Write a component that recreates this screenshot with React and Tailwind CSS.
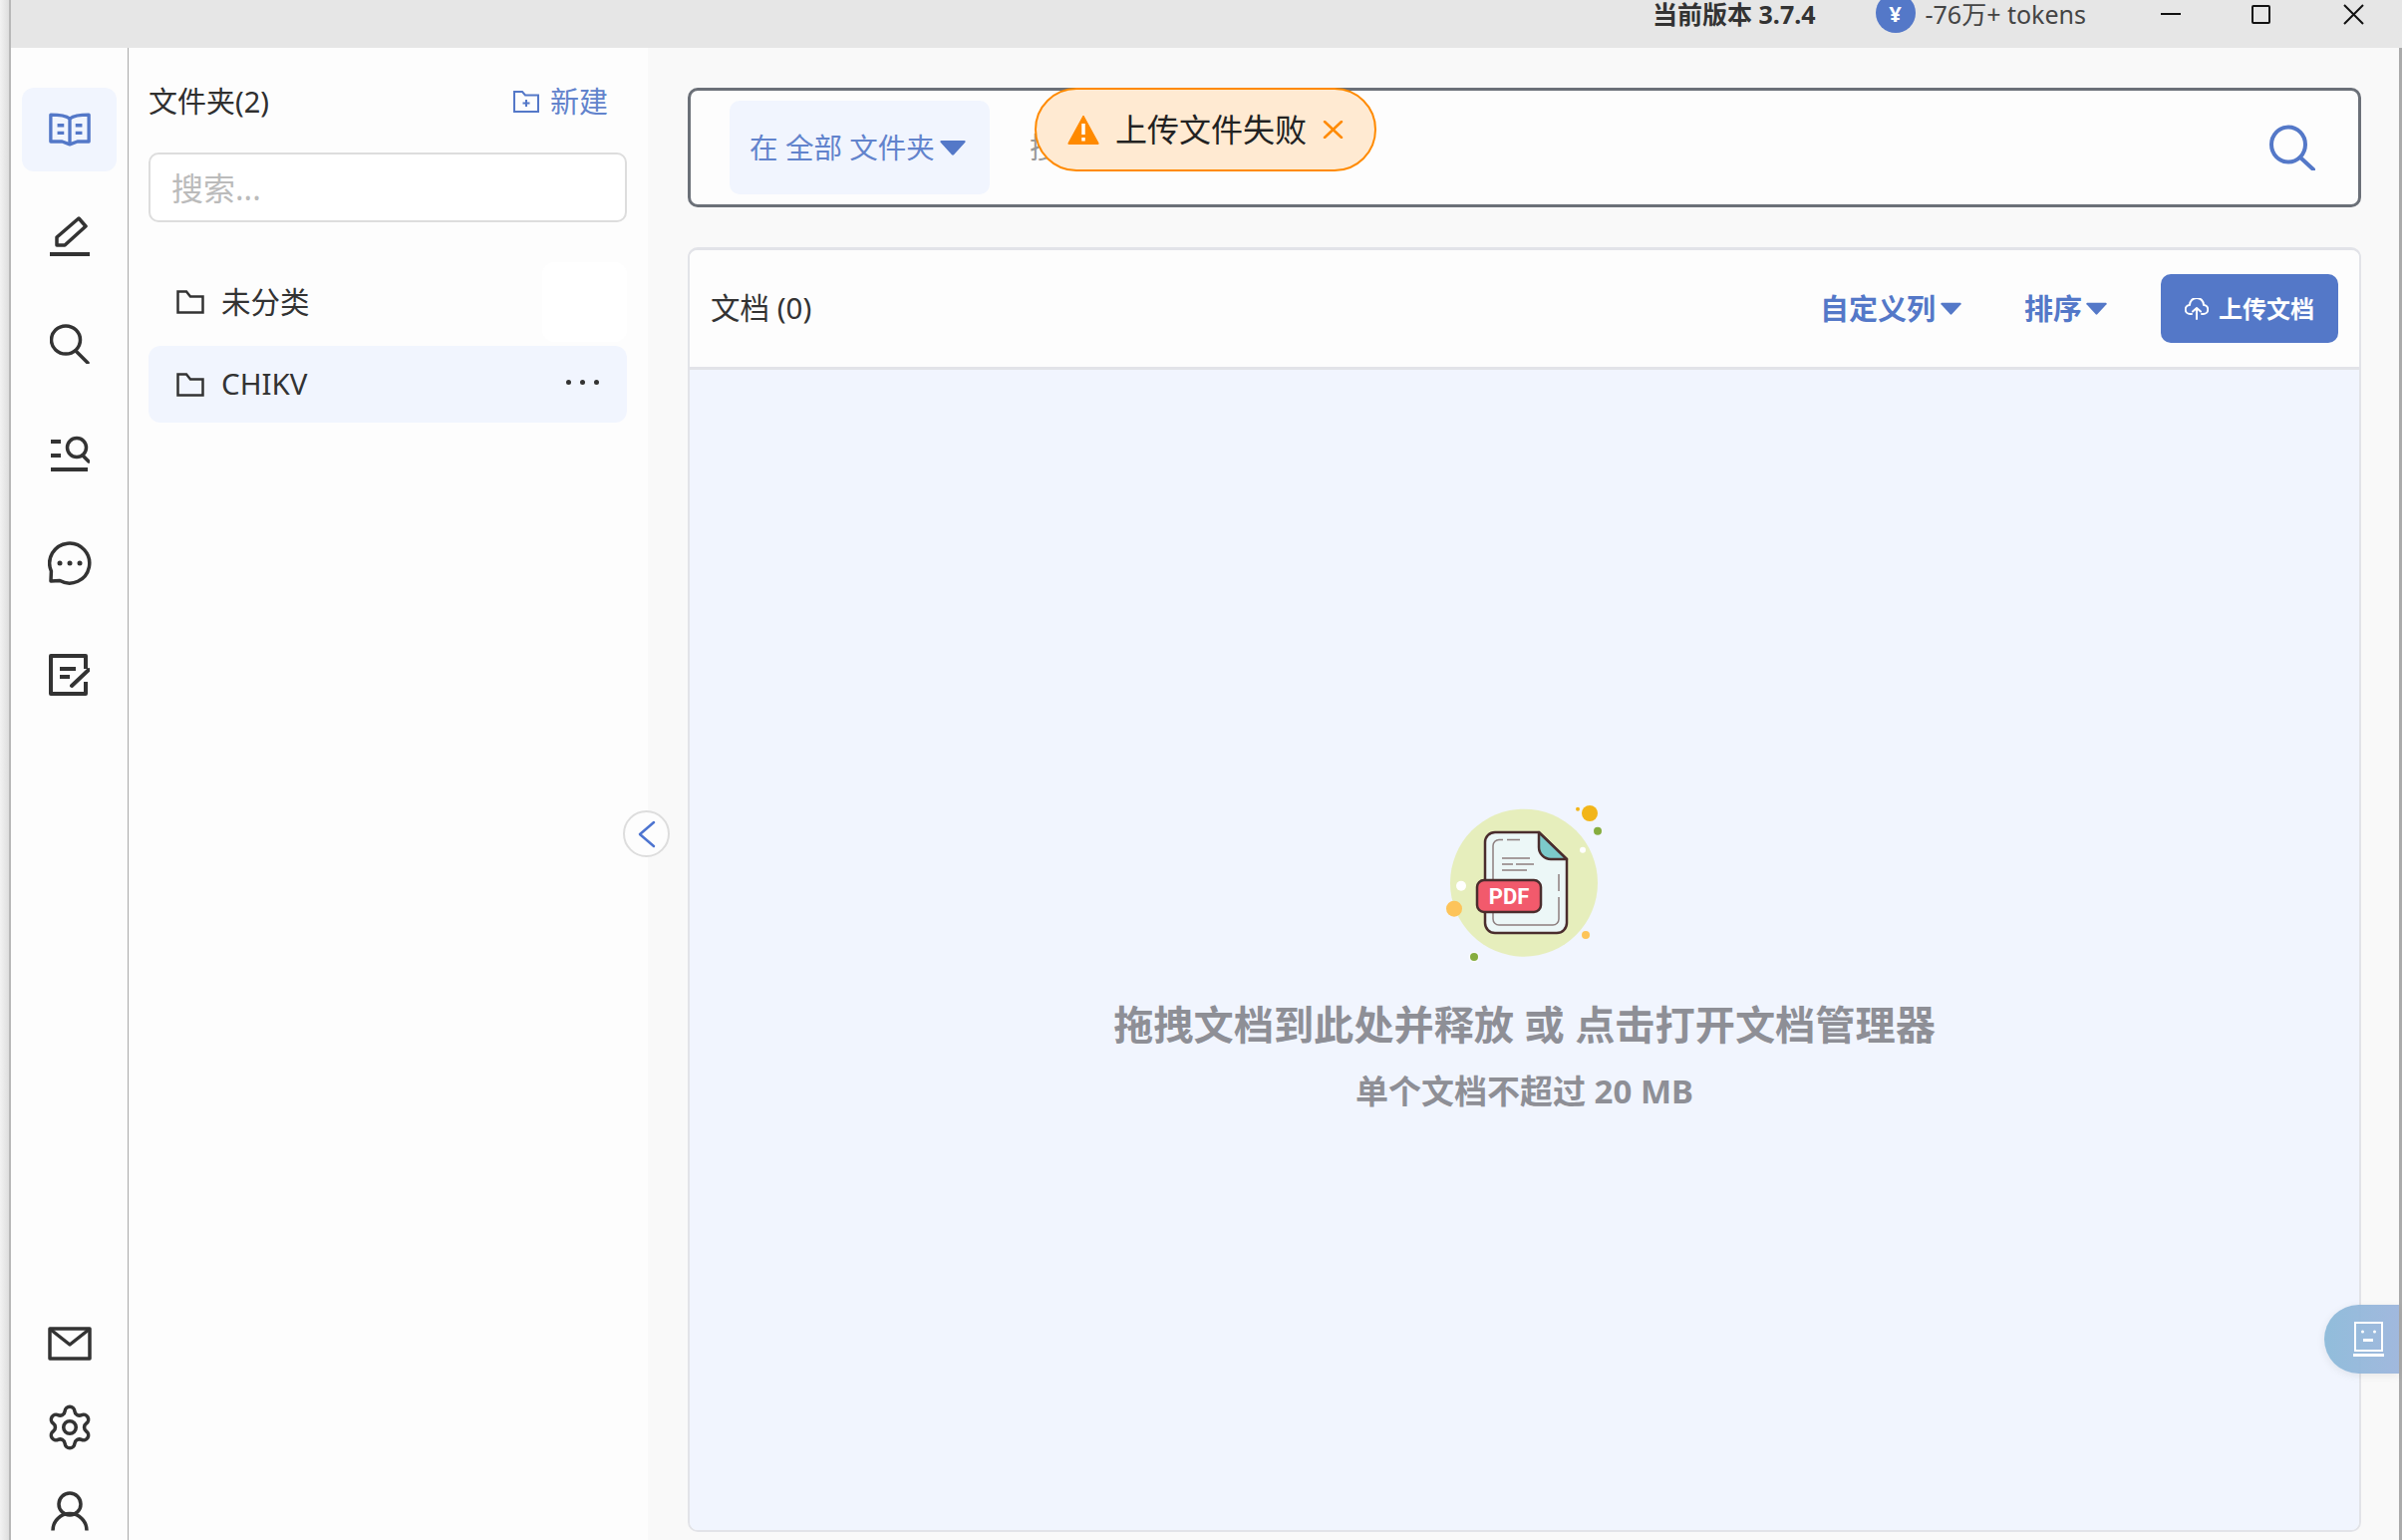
import React from 'react';
import { Settings } from 'lucide-react';

const DARK = '#333333';
const BLUE = '#5478c8';
const FONT = "font-['Noto_Sans','Noto_Sans_CJK_SC',sans-serif]";

// rail icons, each drawn at the size it has in the picture
const BookIcon = () => (
  <svg width="44" height="35" viewBox="0 0 46 36" fill="none" stroke={BLUE} strokeWidth="3.5" strokeLinejoin="round">
    <path d="M23 6C19 3 9 2 3 2V30H15L23 33L31 30H43V2C37 2 27 3 23 6Z" />
    <path d="M23 6V31M10 13H17M10 21H17M29 13H36M29 21H36" />
  </svg>
);

const PenIcon = () => (
  <svg width="40" height="40" viewBox="0 0 40 40" fill="none" stroke={DARK} strokeWidth="3.5" strokeLinejoin="round">
    <path d="M7 29V21L29 2L36 10L15 29Z" />
    <path d="M0 38H40" strokeWidth="4" />
  </svg>
);

const SearchIcon = () => (
  <svg width="40" height="40" viewBox="0 0 40 40" fill="none" stroke={DARK} strokeWidth="3.5" strokeLinecap="round">
    <ellipse cx="16" cy="16" rx="14.5" ry="14" />
    <path d="M26 27L38 39" />
  </svg>
);

const ListSearchIcon = () => (
  <svg width="40" height="36" viewBox="0 0 40 36" fill="none" stroke={DARK} strokeWidth="3.5">
    <path d="M1 6H11M1 20H11" strokeWidth="4" />
    <circle cx="27" cy="12" r="9.5" />
    <path d="M33 20L39 26" strokeLinecap="round" />
    <path d="M1 34H38" strokeWidth="4" />
  </svg>
);

const ChatIcon = () => (
  <svg width="44" height="44" viewBox="0 0 44 44" fill={DARK}>
    <path d="M3 40L3.4 30A20 20 0 1 1 12 39.5Z" fill="none" stroke={DARK} strokeWidth="3.5" strokeLinejoin="round" />
    <circle cx="12" cy="22" r="2.5" />
    <circle cx="22" cy="22" r="2.5" />
    <circle cx="32" cy="22" r="2.5" />
  </svg>
);

const NoteIcon = () => (
  <svg width="41" height="42" viewBox="0 0 41 42" fill="none" stroke={DARK} strokeWidth="4">
    <path d="M37 15V2H2V40H37V28" strokeLinejoin="round" />
    <path d="M11 15H27M11 23H21" />
    <path d="M23 32L40 16" strokeLinecap="round" />
  </svg>
);

const MailIcon = () => (
  <svg width="44" height="34" viewBox="0 0 44 34" fill="none" stroke={DARK} strokeWidth="3.5" strokeLinejoin="round">
    <rect x="2" y="2" width="40" height="30" />
    <path d="M3 3L22 18L41 3" />
  </svg>
);

const UserIcon = () => (
  <svg width="38" height="40" viewBox="0 0 38 40" fill="none" stroke={DARK} strokeWidth="3.5">
    <circle cx="19" cy="13" r="11" />
    <path d="M2 39.5A17 17 0 0 1 36 39.5" />
  </svg>
);

const FolderIcon = () => (
  <svg width="28" height="24" viewBox="0 0 28 24" fill="none" stroke={DARK} strokeWidth="2.5">
    <path d="M1.5 1.5H10L14 6.5H26.5V22.5H1.5Z" />
  </svg>
);

const NewFolderIcon = () => (
  <svg width="26" height="22" viewBox="0 0 26 22" fill="none" stroke={BLUE} strokeWidth="2">
    <path d="M1 1H9L12 4.5H25V21H1Z" />
    <path d="M13 9V16M9.5 12.5H16.5" />
  </svg>
);

const Caret = ({ w = 26, h = 16 }) => (
  <svg width={w} height={h} viewBox="0 0 26 16" preserveAspectRatio="none" fill={BLUE}>
    <path d="M1.5 1H24.5C25.5 1 26 2 25.4 2.8L14 15.2C13.4 15.8 12.6 15.8 12 15.2L.6 2.8C0 2 .5 1 1.5 1Z" />
  </svg>
);

// the document with PDF badge in the empty state
const PdfArt = () => (
  <svg width="200" height="190" viewBox="0 0 200 190" className="mr-[19px]">
    <circle cx="109" cy="95.7" r="74" fill="#e6eebc" />
    <circle cx="175" cy="26" r="8" fill="#f2b519" />
    <circle cx="163" cy="21.7" r="2" fill="#f2b519" />
    <circle cx="183" cy="43.7" r="4" fill="#86ad3f" />
    <circle cx="168" cy="62.7" r="3" fill="#fff" />
    <circle cx="46" cy="98.7" r="5" fill="#fff" />
    <circle cx="39" cy="121.7" r="8" fill="#fdc45a" />
    <circle cx="171" cy="148" r="4" fill="#fdc45a" />
    <circle cx="59" cy="170" r="5.5" fill="#fff" opacity=".6" />
    <circle cx="59" cy="170" r="4" fill="#86ad3f" />
    <path d="M80 45H124L152 72V136A10 10 0 0 1 142 146H80A10 10 0 0 1 70 136V55A10 10 0 0 1 80 45Z" fill="#ecf7f7" stroke="#4a2d2d" strokeWidth="2.5" />
    <path d="M124 45V60A12 12 0 0 0 136 72H152Z" fill="#7ccacb" stroke="#4a2d2d" strokeWidth="2.5" strokeLinejoin="round" />
    <g fill="none" stroke="#8d7f7f" strokeWidth="1.5">
      <path d="M105 52.5H92M88 52.5H84A6 6 0 0 0 78 58.5V132A6 6 0 0 0 84 138H138A6 6 0 0 0 144 132V110M144 104V87" />
      <path d="M87 71H115M87 77H98M101 77H119M87 83H112" />
    </g>
    <rect x="62" y="93" width="64" height="32" rx="7" fill="#f25a6c" stroke="#4a2d2d" strokeWidth="2.5" />
    <text x="94" y="117" textAnchor="middle" fill="#fff" fontSize="22" fontWeight="700" fontFamily="Roboto, sans-serif">PDF</text>
  </svg>
);

const Rail = () => (
  <div className="flex w-[118px] shrink-0 flex-col items-center justify-between border-r border-[#aaaaaa] bg-[#fdfdfd] pt-10 pb-[7px]">
    <div className="flex flex-col items-center">
      <div className="flex h-[84px] w-[95px] items-center justify-center rounded-xl bg-[#f1f5fe]"><BookIcon /></div>
      <div className="mt-[23px] flex h-[84px] items-center"><PenIcon /></div>
      <div className="mt-[24px] flex h-[84px] items-center"><SearchIcon /></div>
      <div className="mt-[26px] flex h-[84px] items-center"><ListSearchIcon /></div>
      <div className="mt-[26px] flex h-[84px] items-center"><ChatIcon /></div>
      <div className="mt-[28px] flex h-[84px] items-center"><NoteIcon /></div>
    </div>
    <div className="flex flex-col items-center gap-10">
      <div className="flex h-11 items-center"><MailIcon /></div>
      <div className="flex h-11 items-center"><Settings size={50} strokeWidth={1.7} color={DARK} /></div>
      <div className="flex h-11 items-center"><UserIcon /></div>
    </div>
  </div>
);

const FolderPanel = () => (
  <div className="flex w-[521px] shrink-0 flex-col bg-[#fdfdfd] pt-[38px] pr-[21px] pl-5">
    <div className="flex h-8 items-center justify-between pr-[19px] text-[29px] text-[#2f2f2f]">
      <span>文件夹(2)</span>
      <span className="flex items-center gap-[11px] text-[#6283cc]"><NewFolderIcon />新建</span>
    </div>
    <input
      className="mt-[35px] h-[70px] rounded-[10px] border-2 border-[#dddddd] bg-white px-[21px] text-[32px] outline-none placeholder:text-[#bbbbbb]"
      placeholder="搜索..."
    />
    <div className="mt-10 flex h-20 items-center pl-7 text-[29.5px] text-[#333333]">
      <FolderIcon />
      <span className="ml-[17px]">未分类</span>
      <div className="ml-auto h-full w-[85px] rounded-xl bg-white" />
    </div>
    <div className="mt-1 flex h-[77px] items-center rounded-xl bg-[#f1f5fe] pr-7 pl-7 text-[29.5px] text-[#333333]">
      <FolderIcon />
      <span className="ml-[17px]">CHIKV</span>
      <div className="mb-1 ml-auto flex gap-[9px]">
        <i className="size-[5px] rounded-full bg-[#333333]" />
        <i className="size-[5px] rounded-full bg-[#333333]" />
        <i className="size-[5px] rounded-full bg-[#333333]" />
      </div>
    </div>
  </div>
);

const SearchBar = () => (
  <div className="flex h-[120px] shrink-0 items-center rounded-[10px] border-[3px] border-[#6b7078] bg-[#fdfdfd]">
    <div className="ml-[39px] flex h-[94px] w-[261px] items-center rounded-[10px] bg-[#f1f5fe] pl-5 text-[28.5px] text-[#6283cc]">
      <span>在 全部 文件夹</span>
      <span className="ml-[5px]"><Caret /></span>
    </div>
    <input className="ml-10 min-w-0 flex-1 bg-transparent text-[29px] outline-none placeholder:text-[#999999]" placeholder="搜索文档" />
    <svg className="mr-[43px]" width="46" height="46" viewBox="0 0 46 46" fill="none" stroke={BLUE} strokeWidth="4" strokeLinecap="round">
      <ellipse cx="19" cy="20" rx="17" ry="17.5" />
      <path d="M31 33L44 45" />
    </svg>
  </div>
);

const DocCard = () => (
  <div className="mt-10 flex min-h-0 flex-1 flex-col overflow-hidden rounded-[10px] border-2 border-t-[3px] border-[#e2e3e8]">
    <div className="flex h-[120px] shrink-0 items-center border-b-[3px] border-[#e2e3e8] bg-[#fdfdfd] px-[21px]">
      <span className="text-[29.5px] text-[#333333]">文档 (0)</span>
      <span className="ml-auto text-[29px] font-bold text-[#5478c8]">自定义列</span>
      <span className="ml-[5px]"><Caret w={21} h={13} /></span>
      <span className="ml-[63px] text-[29px] font-bold text-[#5478c8]">排序</span>
      <span className="ml-1"><Caret w={21} h={13} /></span>
      <button className="ml-[54px] flex h-[69px] w-[178px] items-center rounded-[10px] bg-[#5478c8] pl-6 text-[24px] font-bold text-white">
        <svg width="24" height="22" viewBox="0 0 24 22" fill="none" stroke="#fff" strokeWidth="2" strokeLinecap="round" strokeLinejoin="round">
          <path d="M7 16H5.5A4.5 4.5 0 0 1 5 7 7 7 0 0 1 19 7 4.5 4.5 0 0 1 18.5 16H17" />
          <path d="M12 21V10M8 13.5L12 10L16 13.5" />
        </svg>
        <span className="ml-[10px]">上传文档</span>
      </button>
    </div>
    <div className="flex flex-1 flex-col items-center justify-center bg-[#f1f5fe]">
      <PdfArt />
      <p className="mt-5 text-[40.2px] leading-[56px] font-bold text-[#8e8f96]">拖拽文档到此处并释放 或 点击打开文档管理器</p>
      <p className="mt-[17px] text-[33px] leading-[44px] font-bold text-[#8e8f96]">单个文档不超过 20 MB</p>
    </div>
  </div>
);

export default function App() {
  return (
    <div className={`relative flex h-[1545px] w-[2410px] overflow-hidden bg-white ${FONT}`}>
      <div className="w-[11px] shrink-0 border-r-2 border-[#b8b8b8] bg-linear-to-r from-[#f2f2f2] to-[#dedede]" />
      <div className="flex min-w-0 flex-1 flex-col">
        {/* window title bar */}
        <div className="flex h-12 shrink-0 items-start justify-end bg-[#e6e6e6] pr-[38px] text-[25px] leading-[28px]">
          <span className="font-bold text-[#333333]">当前版本 3.7.4</span>
          <span className="-mt-[7px] ml-[60px] flex size-10 items-center justify-center rounded-full bg-[#5478c8] text-[22px] font-bold text-white">¥</span>
          <span className="ml-[10px] text-[#444444]">-76万+ tokens</span>
          <i className="mt-[13px] ml-[75px] h-[2px] w-5 bg-[#111111]" />
          <i className="mt-[5px] ml-[71px] h-[19px] w-[19px] rounded-[2px] border-2 border-[#111111]" />
          <svg className="mt-1 ml-[73px]" width="21" height="21" viewBox="0 0 21 21" stroke="#111111" strokeWidth="2">
            <path d="M1 1L20 20M20 1L1 20" />
          </svg>
        </div>
        <div className="flex min-h-0 flex-1">
          <Rail />
          <FolderPanel />
          <div className="flex min-w-0 flex-1 flex-col border-r-[3px] border-[#aaaaaa] bg-[#f9f9f9] pt-10 pr-[38px] pb-2 pl-10">
            <SearchBar />
            <DocCard />
          </div>
        </div>
      </div>

      {/* overlays: toast, collapse handle, assistant bubble */}
      <div className="absolute top-[88px] left-[1038px] flex h-[84px] w-[343px] items-center rounded-full border-2 border-[#ff8a00] bg-[#ffead2] pl-[31px] text-[32px] text-[#222222]">
        <svg width="32" height="30" viewBox="0 0 32 30">
          <path d="M16 1L31 28.5C31.4 29.3 31 30 30 30H2C1 30 .6 29.3 1 28.5Z" fill="#ff8a00" stroke="#ff8a00" strokeLinejoin="round" />
          <path d="M16 9V20M16 23V26.5" stroke="#fff" strokeWidth="3.5" />
        </svg>
        <span className="ml-4">上传文件失败</span>
        <svg className="ml-4" width="21" height="18" viewBox="0 0 21 18" stroke="#ff8a00" strokeWidth="2.5" strokeLinecap="round">
          <path d="M2 1L19 17M19 1L2 17" />
        </svg>
      </div>
      <div className="absolute top-[813px] left-[625px] flex size-[47px] items-center justify-center rounded-full border-2 border-[#dddddd] bg-[#fdfdfd]">
        <svg width="18" height="28" viewBox="0 0 18 28" fill="none" stroke="#4d74d0" strokeWidth="2.5" strokeLinecap="round" strokeLinejoin="round">
          <path d="M16 2L2 14L16 26" />
        </svg>
      </div>
      <div className="absolute top-[1309px] right-[3px] flex h-[69px] w-[75px] items-center rounded-l-[35px] bg-linear-to-r from-[#8cbad9]/95 to-[#9cb5dc]/95 pl-[29px] shadow-[0_2px_8px_rgba(0,0,0,0.08)]">
        <svg width="31" height="35" viewBox="0 0 31 35" fill="none" stroke="#fff" strokeWidth="2">
          <rect x="2" y="1" width="27" height="28" />
          <path d="M0 33.5H31" strokeWidth="3" />
          <path d="M10 18.5H20" strokeWidth="3" />
          <circle cx="9.5" cy="10" r="1.5" fill="#fff" stroke="none" />
          <circle cx="21.5" cy="10" r="1.5" fill="#fff" stroke="none" />
        </svg>
      </div>
    </div>
  );
}
